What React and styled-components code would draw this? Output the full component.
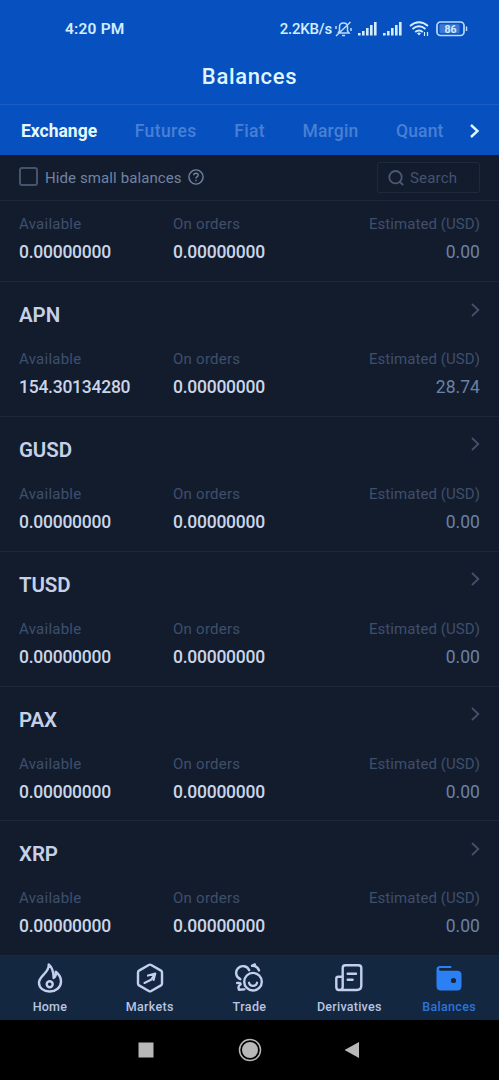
import React from "react";
import styled, { createGlobalStyle } from "styled-components";

const Global = createGlobalStyle`
  * { box-sizing: border-box; }
  body { margin: 0; background: #000; font-family: Roboto, "Liberation Sans", sans-serif; }
`;

const Screen = styled.main`
  width: 499px;
  height: 1080px;
  display: flex;
  flex-direction: column;
  overflow: hidden;
  background: #131c2d;
  white-space: nowrap;
`;

const Header = styled.header`
  flex: none;
  height: 155px;
  background: #0750c0;
`;

const StatusBar = styled.div`
  height: 50px;
  padding: 8px 31px 0 65px;
  display: flex;
  align-items: center;
  color: #d3edff;
  font-size: 15.5px;
  font-weight: 600;
`;

const Clock = styled.span`
  letter-spacing: 0.2px;
  margin-right: auto;
`;

const Speed = styled.span`
  font-size: 15px;
  font-weight: 500;
  letter-spacing: -0.2px;
  margin-right: 3px;
`;

const StatusIcon = styled.svg`
  flex: none;
  margin-right: ${(p) => p.$gap || 0}px;
`;

const BatteryText = styled.text`
  font: 700 10.5px Roboto, sans-serif;
  fill: #d3edff;
`;

const Title = styled.h1`
  margin: 0;
  height: 55px;
  padding-top: 1px;
  border-bottom: 1px solid #1b5dc4;
  text-align: center;
  line-height: 52px;
  font-size: 22px;
  font-weight: 500;
  letter-spacing: 0.65px;
  color: #dff5ff;
`;

const Tabs = styled.nav`
  height: 50px;
  padding: 1px 18px 0 21px;
  display: flex;
  align-items: center;
  gap: 37.6px;
`;

const Tab = styled.span`
  font-size: 17.5px;
  font-weight: ${(p) => (p.$active ? 700 : 500)};
  letter-spacing: ${(p) => p.$track}px;
  color: ${(p) => (p.$active ? "#e4f8ff" : "#4780d4")};
`;

const NextTabs = styled.svg`
  flex: none;
  margin-left: -12px;
`;

const Filter = styled.div`
  flex: none;
  height: 46px;
  padding: 0 19px;
  display: flex;
  align-items: center;
  border-bottom: 1px solid #1c2738;
`;

const Checkbox = styled.span`
  width: 19px;
  height: 19px;
  margin-top: -2px;
  border: 2px solid #45536d;
  border-radius: 3px;
  margin-right: 7px;
`;

const FilterLabel = styled.span`
  font-size: 15px;
  letter-spacing: 0.1px;
  color: #7183a0;
  margin-right: 6px;
`;

const HelpIcon = styled.svg`
  margin-top: -2px;
`;

const Search = styled.div`
  margin-left: auto;
  width: 103px;
  height: 31px;
  padding-left: 10px;
  display: flex;
  align-items: center;
  gap: 6px;
  border: 1px solid #1e293d;
  border-radius: 2px;
  font-size: 15px;
  letter-spacing: 0.2px;
  color: #435270;
`;

const List = styled.section`
  flex: 1;
  min-height: 0;
  overflow: hidden;
`;

const Item = styled.article`
  height: ${(p) => (p.$partial ? 81 : 134.85)}px;
  padding: 0 19px;
  border-bottom: 1px solid #1c2738;
`;

const ItemHead = styled.div`
  height: 63px;
  padding-top: 3px;
  display: flex;
  align-items: center;
  justify-content: space-between;
`;

const Symbol = styled.h2`
  margin: 0;
  font-size: 20.5px;
  font-weight: 600;
  letter-spacing: -0.1px;
  color: #c6d1e7;
`;

const Arrow = styled.svg`
  margin-bottom: 11px;
`;

const Columns = styled.div`
  display: grid;
  grid-template-columns: 154px 1fr auto;
  padding-top: ${(p) => (p.$partial ? 9 : 0)}px;
`;

const Cell = styled.div`
  text-align: ${(p) => (p.$end ? "right" : "left")};
`;

const Label = styled.div`
  height: 28px;
  line-height: 28px;
  font-size: 15px;
  letter-spacing: ${(p) => p.$track}px;
  color: #3e4f6c;
`;

const Value = styled.div`
  height: 28px;
  line-height: 28px;
  font-size: 17.5px;
  font-weight: ${(p) => (p.$muted ? 400 : 500)};
  letter-spacing: ${(p) => (p.$muted ? 0.05 : -0.25)}px;
  color: ${(p) => (p.$muted ? "#6a82a6" : "#c9d5e9")};
`;

const BottomNav = styled.nav`
  flex: none;
  height: 65px;
  display: grid;
  grid-template-columns: repeat(5, 1fr);
  background: #142740;
  border-top: 1px solid #162b43;
`;

const NavItem = styled.div`
  display: flex;
  flex-direction: column;
  align-items: center;
  padding-top: 7px;
  gap: 5px;
  font-size: 12.5px;
  font-weight: 500;
  line-height: 18px;
  letter-spacing: ${(p) => p.$track}px;
  color: ${(p) => (p.$active ? "#2b75dc" : "#b8c5e2")};
`;

const SystemNav = styled.footer`
  flex: none;
  height: 60px;
  display: flex;
  align-items: center;
  justify-content: center;
  gap: 80px;
  background: #000;
`;

const Signal = ({ gap }) => (
  <StatusIcon $gap={gap} width="19" height="14" viewBox="0 0 19 14" fill="#d3edff">
    <rect x="0" y="11" width="2.6" height="2.5" />
    <rect x="4" y="9" width="2.6" height="4.5" />
    <rect x="8" y="6" width="2.6" height="7.5" />
    <rect x="12" y="3" width="2.6" height="10.5" />
    <rect x="16" y="0" width="2.6" height="13.5" />
  </StatusIcon>
);

const navIcons = {
  Home: (
    <>
      <path d="M13.7 1.5C14.2 5.5 11.8 8 9.2 11C6.4 14 4 16.4 4 19.7C4 25 8.7 28.5 14.7 28.5S26 24.3 26 18.8C26 15 24.1 11.3 20.8 8.8C21.2 12.2 20.6 14 18.6 15C18.6 9 17.5 4.5 13.7 1.5Z" />
      <circle cx="14.7" cy="21.2" r="3" />
    </>
  ),
  Markets: (
    <>
      <path d="M13.8 2Q15 1.3 16.2 2L26 7.6Q27 8.2 27 9.4V20.6Q27 21.8 26 22.4L16.2 28Q15 28.7 13.8 28L4 22.4Q3 21.8 3 20.6V9.4Q3 8.2 4 7.6Z" />
      <path d="M9.5 20L16 16.8L20.3 10.5M13 12.6L20.3 10.5L18.6 17" strokeWidth="2.1" />
    </>
  ),
  Trade: (
    <>
      <circle cx="19" cy="18.7" r="8.8" />
      <path d="M15 19.7A4.1 4.1 0 0 0 23 19.7" strokeWidth="2.2" />
      <path d="M6.3 16.2A6.8 6.8 0 1 1 15.2 7.2M18 2.8Q23.5 2.7 25 7.4M18 2.8L20.8 1.4M3.2 20Q7 19.5 6.5 21.5Q3.5 23 5 26.8L10.3 26.4" />
    </>
  ),
  Derivatives: (
    <>
      <path d="M8.7 5Q8.7 2.3 11.3 2.3H24.5Q27.3 2.3 27.3 5V22.5Q27.3 27 22.8 27H5Q2.3 27 2.3 24V15.5Q2.3 13.7 4.2 13.7H8.4M8.7 5V24Q8.7 27 6 27" />
      <path d="M13.7 10.8H22M13.7 16.8H18.6" />
    </>
  ),
};

const NavIcon = ({ name }) =>
  name === "Balances" ? (
    <svg width="30" height="30" viewBox="0 0 30 30">
      <path
        fill="#2b80f4"
        d="M2.5 6.5Q2.5 3 6 3H17.3V4.9H6.5Q4.9 4.9 4.9 6.2T6.5 7.8H23Q27.5 7.8 27.5 12V23Q27.5 27.5 23 27.5H7Q2.5 27.5 2.5 23Z"
      />
      <circle cx="19.5" cy="17.5" r="2.6" fill="#142740" />
    </svg>
  ) : (
    <svg
      width="30"
      height="30"
      viewBox="0 0 30 30"
      fill="none"
      stroke="#c3cfed"
      strokeWidth="2.4"
      strokeLinecap="round"
      strokeLinejoin="round"
    >
      {navIcons[name]}
    </svg>
  );

const tabs = [
  ["Exchange", 0],
  ["Futures", 0.4],
  ["Fiat", 0.3],
  ["Margin", 0.2],
  ["Quant", 0.1],
];

const navItems = [
  ["Home", 0.2],
  ["Markets", 0.3],
  ["Trade", 0.4],
  ["Derivatives", 0.25],
  ["Balances", 0.3],
];

const balances = [
  { available: "0.00000000", estimated: "0.00" },
  { symbol: "APN", available: "154.30134280", estimated: "28.74" },
  { symbol: "GUSD", available: "0.00000000", estimated: "0.00" },
  { symbol: "TUSD", available: "0.00000000", estimated: "0.00" },
  { symbol: "PAX", available: "0.00000000", estimated: "0.00" },
  { symbol: "XRP", available: "0.00000000", estimated: "0.00" },
];

const BalanceItem = ({ symbol, available, estimated }) => (
  <Item $partial={!symbol}>
    {symbol && (
      <ItemHead>
        <Symbol>{symbol}</Symbol>
        <Arrow width="10" height="14" viewBox="0 0 10 14" fill="none" stroke="#435069" strokeWidth="1.8">
          <path d="M2 1L8.3 7L2 13" />
        </Arrow>
      </ItemHead>
    )}
    <Columns $partial={!symbol}>
      <Cell>
        <Label $track={0.25}>Available</Label>
        <Value>{available}</Value>
      </Cell>
      <Cell>
        <Label $track={0.25}>On orders</Label>
        <Value>0.00000000</Value>
      </Cell>
      <Cell $end>
        <Label $track={0.07}>Estimated (USD)</Label>
        <Value $muted>{estimated}</Value>
      </Cell>
    </Columns>
  </Item>
);

export default function App() {
  return (
    <Screen>
      <Global />
      <Header>
        <StatusBar>
          <Clock>4:20 PM</Clock>
          <Speed>2.2KB/s</Speed>
          <StatusIcon $gap={6} width="17" height="16" viewBox="0 0 17 16" fill="none" stroke="#b9dafa" strokeWidth="1.5">
            <path d="M3 12H14L12.5 10V6Q12.5 2 8.5 2T4.5 6V10L3 12M7 14.5H10M1 15L15.5 1M1 5V8M16 7V10" />
          </StatusIcon>
          <Signal gap={6} />
          <Signal gap={7} />
          <StatusIcon $gap={6} width="21" height="16" viewBox="0 0 21 16" fill="none" stroke="#d3edff" strokeWidth="1.9">
            <path d="M1 5Q10 -2.5 19 5M3.5 8Q10 2.6 16.5 8M6.2 11Q10 7.8 13.8 11" />
            <path d="M8 12.2Q10 10.7 12 12.2L10 14.5Z" fill="#d3edff" stroke="none" />
            <path d="M15.5 11V15M18.5 11V15" strokeWidth="1.2" />
          </StatusIcon>
          <StatusIcon width="32" height="16" viewBox="0 0 32 16">
            <rect x="1" y="1" width="27" height="13.5" rx="3.5" fill="none" stroke="#b9dafa" strokeWidth="1.7" />
            <rect x="3.5" y="3.3" width="20" height="9" rx="1" fill="#3e78d4" />
            <path d="M30.5 5.5V10" stroke="#b9dafa" strokeWidth="1.5" />
            <BatteryText x="8.6" y="11.6">86</BatteryText>
          </StatusIcon>
        </StatusBar>
        <Title>Balances</Title>
        <Tabs>
          {tabs.map(([name, track], i) => (
            <Tab key={name} $active={i === 0} $track={track}>
              {name}
            </Tab>
          ))}
          <NextTabs width="11" height="14" viewBox="0 0 11 14" fill="none" stroke="#dff5ff" strokeWidth="2.4">
            <path d="M2 1L8.5 7L2 13" />
          </NextTabs>
        </Tabs>
      </Header>
      <Filter>
        <Checkbox />
        <FilterLabel>Hide small balances</FilterLabel>
        <HelpIcon width="16" height="16" viewBox="0 0 16 16" fill="none" stroke="#7183a0" strokeWidth="1.4">
          <circle cx="8" cy="8" r="7.1" />
          <path d="M5.8 6.3Q5.8 4.3 8 4.3T10.2 6.2Q10.2 7.3 9 7.8Q8 8.2 8 9.5M8 10.7V12.2" />
        </HelpIcon>
        <Search>
          <svg width="16" height="16" viewBox="0 0 16 16" fill="none" stroke="#4b5977" strokeWidth="1.8">
            <circle cx="7.5" cy="7.2" r="6.2" />
            <path d="M11.5 11.5L15.2 15.2" />
          </svg>
          Search
        </Search>
      </Filter>
      <List>
        {balances.map((b, i) => (
          <BalanceItem key={i} {...b} />
        ))}
      </List>
      <BottomNav>
        {navItems.map(([name, track]) => (
          <NavItem key={name} $active={name === "Balances"} $track={track}>
            <NavIcon name={name} />
            {name}
          </NavItem>
        ))}
      </BottomNav>
      <SystemNav>
        <svg width="24" height="24" viewBox="0 0 24 24">
          <rect x="4.5" y="4.5" width="15" height="15" fill="#b8b8b8" />
        </svg>
        <svg width="24" height="24" viewBox="0 0 24 24">
          <circle cx="12" cy="12" r="10.5" fill="none" stroke="#b8b8b8" strokeWidth="1.5" />
          <circle cx="12" cy="12" r="8" fill="#b8b8b8" />
        </svg>
        <svg width="24" height="24" viewBox="0 0 24 24">
          <path d="M2.5 12L17 4V20Z" fill="#b8b8b8" />
        </svg>
      </SystemNav>
    </Screen>
  );
}
